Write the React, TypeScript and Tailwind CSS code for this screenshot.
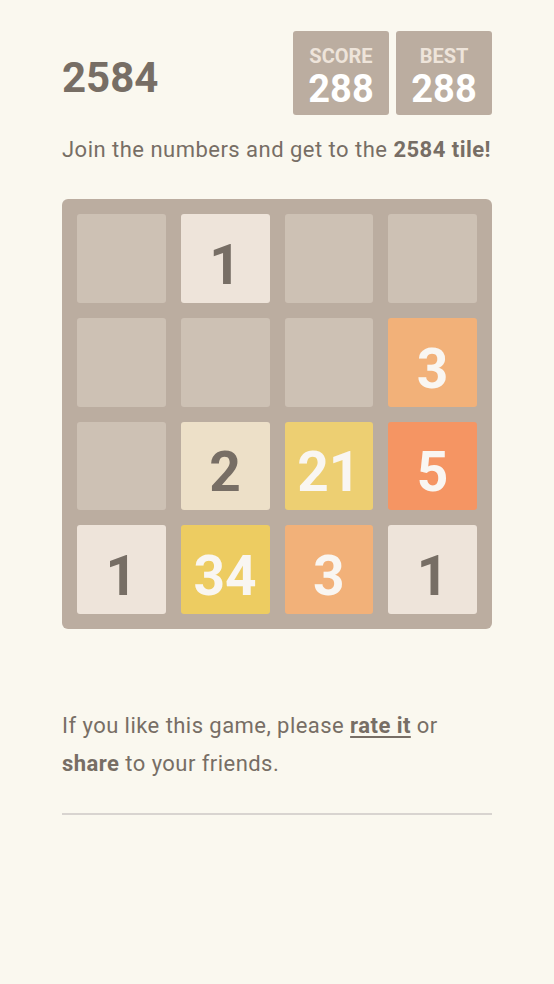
import React from 'react';

type Tile = number | null;

const board: Tile[][] = [
  [null, 1, null, null],
  [null, null, null, 3],
  [null, 2, 21, 5],
  [1, 34, 3, 1],
];

const tileStyle = (v: number) => {
  switch (v) {
    case 1:
      return 'bg-[#eee4da] text-[#776e65]';
    case 2:
      return 'bg-[#ede0c8] text-[#776e65]';
    case 3:
      return 'bg-[#f2b179] text-[#f9f6f2]';
    case 5:
      return 'bg-[#f59563] text-[#f9f6f2]';
    case 21:
      return 'bg-[#edcf72] text-[#f9f6f2]';
    case 34:
      return 'bg-[#edcc61] text-[#f9f6f2]';
    default:
      return 'bg-[#eee4da] text-[#776e65]';
  }
};

const ScoreBox = ({ label, value }: { label: string; value: number }) => (
  <div className="w-[96px] h-[84px] pt-[8px] rounded-[3px] bg-[#bbada0] flex flex-col items-center justify-center">
    <span className="text-[20px] leading-[24px] font-bold text-[#eee4da]">{label}</span>
    <span className="text-[38px] leading-[42px] font-bold text-white">{value}</span>
  </div>
);

export default function App() {
  return (
    <div
      className="min-h-screen bg-[#faf8ef] text-[#776e65]"
      style={{ fontFamily: 'Roboto, "Liberation Sans", sans-serif' }}
    >
      <div className="w-[430px] mx-auto pt-[31px]">
        {/* Header */}
        <div className="flex items-center justify-between">
          <h1 className="text-[42px] leading-none font-bold mt-[9px]">2584</h1>
          <div className="flex gap-[7px]">
            <ScoreBox label="SCORE" value={288} />
            <ScoreBox label="BEST" value={288} />
          </div>
        </div>

        <p className="mt-[20px] text-[22px] leading-[30px] tracking-[0.48px]">
          Join the numbers and get to the <strong className="font-bold">2584 tile!</strong>
        </p>

        {/* Board */}
        <div className="mt-[34px] w-[430px] h-[430px] rounded-[6px] bg-[#bbada0] p-[15px] grid grid-cols-4 grid-rows-4 gap-[15px]">
          {board.flat().map((v, i) =>
            v === null ? (
              <div key={i} className="rounded-[3px] bg-[#cdc1b4]" />
            ) : (
              <div
                key={i}
                className={`rounded-[3px] flex items-center justify-center pt-[14px] text-[55px] font-bold leading-none ${tileStyle(v)}`}
              >
                {v}
              </div>
            )
          )}
        </div>

        <p className="mt-[78px] text-[22px] leading-[38px] tracking-[0.45px]">
          If you like this game, please{' '}
          <a className="font-bold underline underline-offset-[3px]">rate it</a> or{' '}
          <strong className="font-bold">share</strong> to your friends.
        </p>

        <hr className="mt-[30px] border-0 h-[2px] bg-[#d8d4d0]" />
      </div>
    </div>
  );
}
